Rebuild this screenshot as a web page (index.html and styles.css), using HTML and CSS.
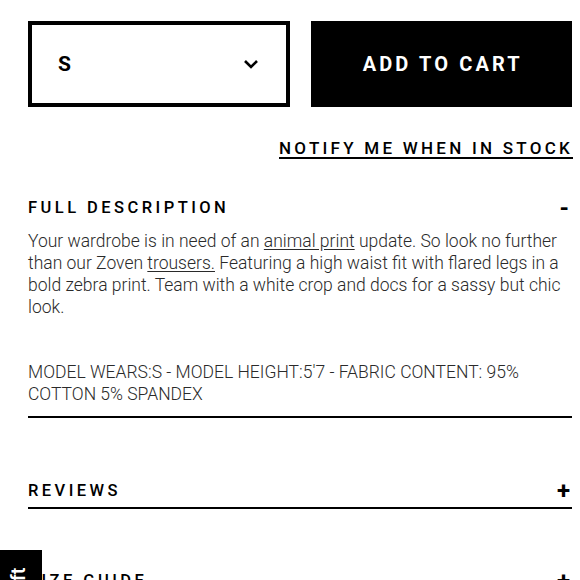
FILE: index.html
```html
<!DOCTYPE html>
<html>
<head>
<meta charset="utf-8">
<link rel="stylesheet" href="styles.css">
</head>
<body>
<div class="page">
  <div class="buy-row">
    <div class="size-select">
      <span class="size-value">S</span>
      <svg class="chevron" width="16" height="10" viewBox="0 0 16 10"><path d="M2 2 L8 8 L14 2" fill="none" stroke="#000" stroke-width="2.6"/></svg>
    </div>
    <button class="add-btn">ADD TO CART</button>
  </div>
  <div class="notify-row"><a class="notify">NOTIFY ME WHEN IN STOCK</a></div>

  <section class="acc open">
    <div class="acc-head"><span class="acc-title">FULL DESCRIPTION</span><span class="acc-icon minus">-</span></div>
    <p class="desc">Your wardrobe is in need of an <a class="ul">animal print</a> update. So look no further than our Zoven <a class="ul">trousers.</a> Featuring a high waist fit with flared legs in a bold zebra print. Team with a white crop and docs for a sassy but chic look.</p>
    <p class="meta">MODEL WEARS:S - MODEL HEIGHT:5'7 - FABRIC CONTENT: 95% COTTON 5% SPANDEX</p>
  </section>

  <section class="acc closed">
    <div class="acc-head"><span class="acc-title">REVIEWS</span><span class="acc-icon">+</span></div>
  </section>

  <section class="acc closed">
    <div class="acc-head"><span class="acc-title">SIZE GUIDE</span><span class="acc-icon">+</span></div>
  </section>
</div>
<div class="side-tab"><span>Gift</span></div>
</body>
</html>
```

FILE: styles.css
```css
html, body {
  margin: 0;
  padding: 0;
  background: #fff;
  overflow: hidden;
}
body {
  font-family: Roboto, "Liberation Sans", sans-serif;
  color: #000;
}
.page {
  padding: 21px 8px 0 28px;
}
.buy-row {
  display: grid;
  grid-template-columns: 1fr 1fr;
  gap: 21px;
  height: 86px;
}
.size-select {
  box-sizing: border-box;
  border: 4px solid #000;
  display: flex;
  align-items: center;
  justify-content: space-between;
  padding: 0 27px 0 26px;
}
.size-value {
  font-size: 21px;
  font-weight: 700;
}
.chevron {
  display: block;
}
.add-btn {
  background: #000;
  color: #fff;
  border: 0;
  font-family: Roboto, "Liberation Sans", sans-serif;
  font-size: 20px;
  font-weight: 700;
  letter-spacing: 3.1px;
  padding: 0 0 0 3px;
}
.notify-row {
  display: flex;
  justify-content: flex-end;
  margin-top: 31px;
}
.notify {
  font-size: 17px;
  font-weight: 500;
  letter-spacing: 3.25px;
  margin-right: -1px;
  text-decoration: underline;
  text-underline-offset: 3px;
  text-decoration-thickness: 1.5px;
  line-height: 20px;
}
.acc {
  border-bottom: 2px solid #000;
}
.acc-head {
  display: flex;
  justify-content: space-between;
  align-items: center;
  line-height: 20px;
}
.acc-title {
  font-size: 16.5px;
  font-weight: 500;
  letter-spacing: 3.45px;
}
.acc-icon {
  font-size: 24px;
  font-weight: 700;
  line-height: 20px;
  margin-right: 2px;
}
.acc-icon.minus {
  margin-right: 3px;
}
.open {
  margin-top: 40px;
  padding-bottom: 11px;
}
.open .acc-head {
  margin-bottom: 12px;
}
.desc, .meta {
  margin: 0;
  font-size: 17.5px;
  font-weight: 300;
  line-height: 22px;
  color: #2a2a2a;
}
.meta {
  margin-top: 43px;
}
.ul {
  text-decoration: underline;
  text-underline-offset: 2px;
}
.closed {
  margin-top: 63px;
  padding-bottom: 6px;
}
.closed + .closed {
  margin-top: 62px;
}
.side-tab {
  position: fixed;
  left: 0;
  top: 550px;
  width: 42px;
  height: 40px;
  background: #000;
  color: #fff;
  overflow: hidden;
}
.side-tab span {
  position: absolute;
  left: 8px;
  top: 50px;
  font-size: 20px;
  line-height: 20px;
  font-weight: 500;
  transform: rotate(-90deg);
  transform-origin: left top;
  white-space: nowrap;
}
```
